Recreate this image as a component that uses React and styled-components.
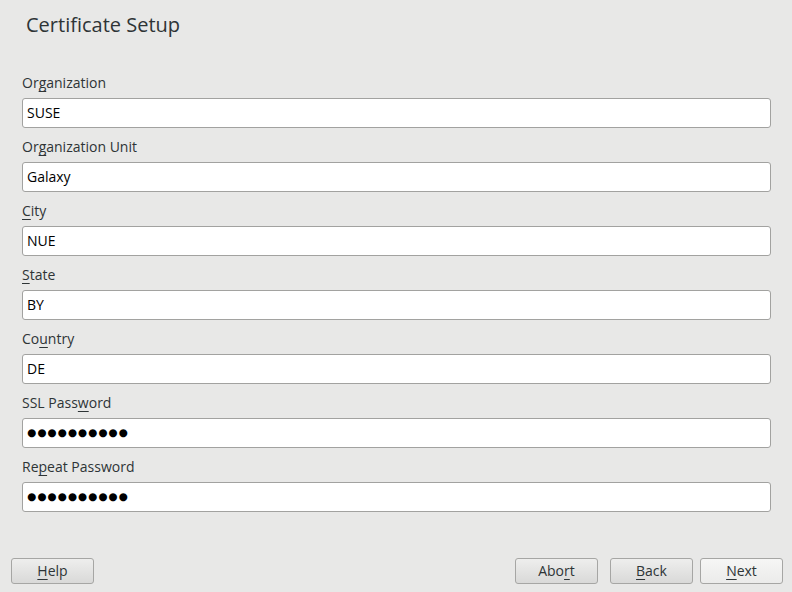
import React from "react";
import styled, { createGlobalStyle } from "styled-components";

const Global = createGlobalStyle`
  html, body { margin: 0; padding: 0; height: 100%; }
  body {
    background: #e8e8e7;
    font-family: "Open Sans", "Noto Sans", "DejaVu Sans", sans-serif;
    color: #2e3436;
  }
  #root { height: 100%; }
`;

const Page = styled.div`
  height: 592px;
  display: flex;
  flex-direction: column;
  box-sizing: border-box;
`;

const Title = styled.h1`
  margin: 0;
  padding: 11px 0 0 26px;
  height: 54px;
  box-sizing: border-box;
  font-size: 20px;
  font-weight: 400;
  line-height: 28px;
  color: #2e3436;
`;

const Form = styled.div`
  display: flex;
  flex-direction: column;
  padding: 0 21px 0 22px;
  margin-top: 10px;
`;

const Field = styled.div`
  display: flex;
  flex-direction: column;
`;

const Label = styled.label`
  font-size: 14px;
  line-height: 19px;
  padding: 9px 0 6px;
  color: #2e3436;
`;

const U = styled.span`
  text-decoration: underline;
  text-underline-offset: 3px;
`;

const Input = styled.div`
  height: 30px;
  box-sizing: border-box;
  border: 1px solid #a2a2a0;
  border-radius: 3px;
  background: #ffffff;
  padding: 0 4px 1px;
  display: flex;
  align-items: center;
  font-size: 14px;
  color: #000;
`;

const Dots = styled.span`
  font-family: "DejaVu Sans", sans-serif;
  font-size: 10.5px;
  letter-spacing: 1px;
  line-height: 1;
`;

const Spacer = styled.div`
  flex: 1;
`;

const Footer = styled.div`
  display: flex;
  align-items: center;
  padding: 0 9px 8px 11px;
`;

const Button = styled.button`
  width: 83px;
  height: 26px;
  box-sizing: border-box;
  border: 1px solid #a6a6a4;
  border-radius: 3px;
  background: ${(p) =>
    p.$default
      ? "linear-gradient(#f6f6f5, #ebebea)"
      : "linear-gradient(#eeeeed, #d9d9d8)"};
  font-family: "Open Sans", "Noto Sans", sans-serif;
  font-size: 14px;
  line-height: 18px;
  color: #2e3436;
  padding: 0 0 1px;
  margin-left: ${(p) => p.$gap || 0}px;
`;

const fields = [
  { pre: "Or", u: "g", post: "anization", value: "SUSE" },
  { pre: "Or", u: "g", post: "anization Unit", value: "Galaxy" },
  { pre: "", u: "C", post: "ity", value: "NUE" },
  { pre: "", u: "S", post: "tate", value: "BY" },
  { pre: "Co", u: "u", post: "ntry", value: "DE" },
  { pre: "SSL Pass", u: "w", post: "ord", value: "●●●●●●●●●●", pw: true },
  { pre: "Re", u: "p", post: "eat Password", value: "●●●●●●●●●●", pw: true },
];

export default function App() {
  return (
    <Page>
      <Global />
      <Title>Certificate Setup</Title>
      <Form>
        {fields.map((f, i) => (
          <Field key={i}>
            <Label>
              {f.pre}
              <U>{f.u}</U>
              {f.post}
            </Label>
            <Input>{f.pw ? <Dots>{f.value}</Dots> : f.value}</Input>
          </Field>
        ))}
      </Form>
      <Spacer />
      <Footer>
        <Button>
          <U>H</U>elp
        </Button>
        <Spacer />
        <Button>
          Abo<U>r</U>t
        </Button>
        <Button $gap={12}>
          <U>B</U>ack
        </Button>
        <Button $gap={7} $default>
          <U>N</U>ext
        </Button>
      </Footer>
    </Page>
  );
}
